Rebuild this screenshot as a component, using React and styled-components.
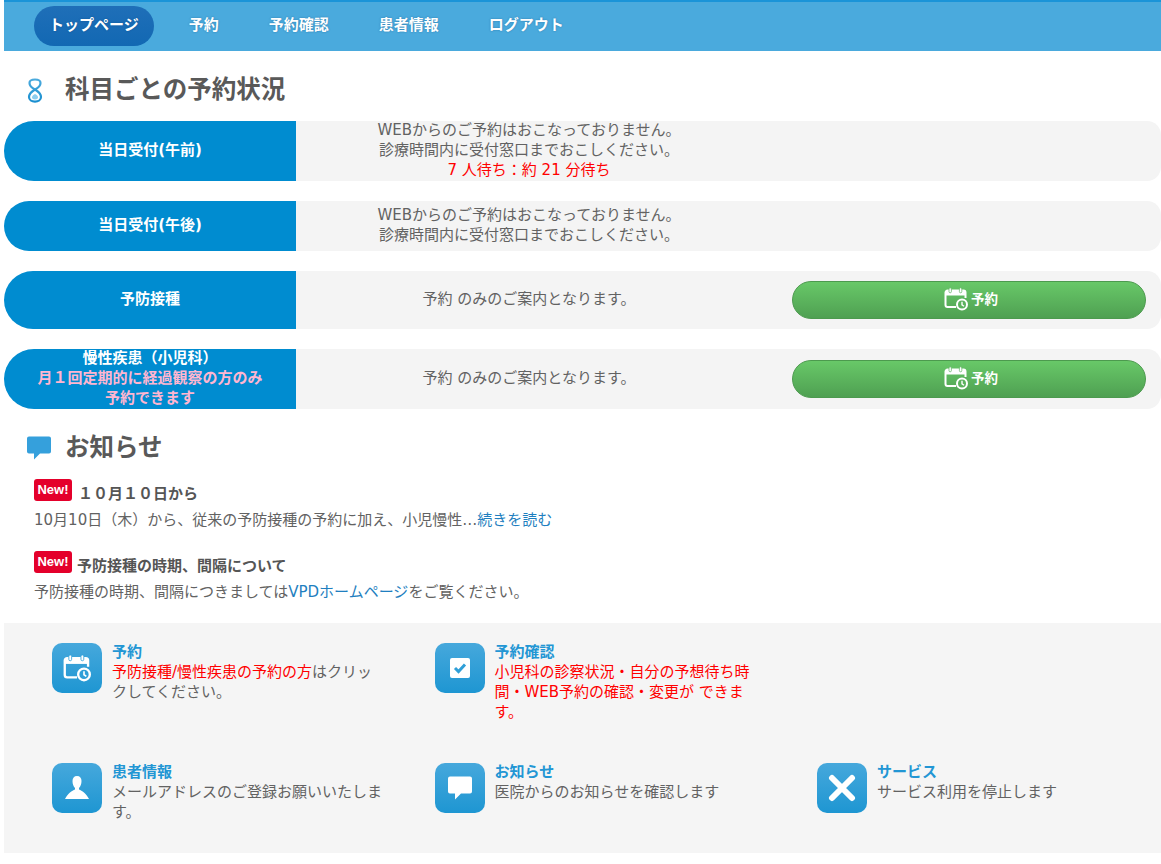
import React from "react";
import styled, { createGlobalStyle } from "styled-components";

const GlobalStyle = createGlobalStyle`
  html, body { margin: 0; padding: 0; background: #fff; }
  body {
    padding-left: 4px;
    font-family: "DejaVu Sans", "Noto Sans CJK JP", sans-serif;
    font-size: 15px;
    line-height: 20px;
    color: #626262;
  }
`;

// Icons
const CalendarClock = ({ size = 24 }) => (
  <svg width={size} height={size} viewBox="0 0 24 24" fill="none">
    <path d="M12 20H3.500A2 2 0 0 1 1.500 18V5.500a2 2 0 0 1 2-2h16a2 2 0 0 1 2 2V11" stroke="#fff" strokeWidth="2" />
    <path d="M1.500 4h20v4.500h-20z" fill="#fff" />
    <rect x="5" y=".8" width="2.400" height="5" rx="1.200" fill="#fff" stroke="currentColor" strokeWidth=".7" />
    <rect x="15.400" y=".8" width="2.400" height="5" rx="1.200" fill="#fff" stroke="currentColor" strokeWidth=".7" />
    <circle cx="18" cy="17.500" r="5" fill="currentColor" stroke="#fff" strokeWidth="2" />
    <path d="M18 14.800v3l2 1.400" stroke="#fff" strokeWidth="1.400" />
  </svg>
);

const CheckBox = () => (
  <svg width="20" height="20" viewBox="0 0 20 20">
    <rect width="20" height="20" rx="2" fill="#fff" />
    <path d="M5 10l3.500 3.500L15 6.500" fill="none" stroke="#2f9fd8" strokeWidth="3" />
  </svg>
);

const Bubble = ({ size = 24, fill = "#fff" }) => (
  <svg width={size} height={size} viewBox="0 0 24 23">
    <path d="M2 0h20a2 2 0 0 1 2 2v13a2 2 0 0 1-2 2H13l-6 6v-6H2a2 2 0 0 1-2-2V2a2 2 0 0 1 2-2z" fill={fill} />
  </svg>
);

const Person = () => (
  <svg width="24" height="24" viewBox="0 0 24 24" fill="#fff">
    <path d="M12 0c3 0 4.500 2 4.500 5 0 3-1 5.500-2.500 7v1.500c3 1.500 7 3.500 10 9.500H0c3-6 7-8 10-9.500V12C8.500 10.500 7.500 8 7.500 5c0-3 1.500-5 4.500-5z" />
  </svg>
);

const Cross = () => (
  <svg width="28" height="28" viewBox="0 0 28 28">
    <path d="M4 4l20 20M24 4L4 24" stroke="#fff" strokeWidth="6" strokeLinecap="round" />
  </svg>
);

const Hourglass = () => (
  <svg width="16" height="25" viewBox="0 0 16 25" fill="none">
    <defs>
      <linearGradient id="hg" x1="0" y1="0" x2="0" y2="1">
        <stop offset="0" stopColor="#4aaadd" />
        <stop offset="1" stopColor="#1a8fd0" />
      </linearGradient>
    </defs>
    <path d="M8 11.500C4 9.500 2.500 7.500 2.500 5 2.500 2.800 5 1.500 8 1.500S13.500 2.800 13.500 5C13.500 7.500 12 9.500 8 11.500c4 2.500 6 5 6 7.500 0 2.800-2.800 4.600-6 4.600S2 21.800 2 19c0-2.500 2-5 6-7.500z" stroke="url(#hg)" strokeWidth="2.200" />
    <path d="M8 16c2 1 3 2 3 3.300 0 1.400-1.300 2.200-3 2.200s-3-.8-3-2.200C5 18 6 17 8 16z" fill="#8ccdee" />
  </svg>
);

// Data
const navItems = ["トップページ", "予約", "予約確認", "患者情報", "ログアウト"];

const notReserved = ["WEBからのご予約はおこなっておりません。", "診療時間内に受付窓口までおこしください。"];

export default function App() {
  return (
    <>
      <GlobalStyle />
      <Nav>
        {navItems.map((item, i) => (
          <NavItem key={item} href="#" $active={i === 0}>{item}</NavItem>
        ))}
      </Nav>

      <Heading>
        <HeadingIcon><Hourglass /></HeadingIcon>
        科目ごとの予約状況
      </Heading>

      <Rows>
        <Row $h={60}>
          <RowLabel>当日受付(午前)</RowLabel>
          <RowBody>
            <RowText>
              {notReserved[0]}<br />{notReserved[1]}<br />
              <Red>7 人待ち：約 21 分待ち</Red>
            </RowText>
          </RowBody>
        </Row>
        <Row $h={50}>
          <RowLabel>当日受付(午後)</RowLabel>
          <RowBody>
            <RowText>{notReserved[0]}<br />{notReserved[1]}</RowText>
          </RowBody>
        </Row>
        <Row $h={58}>
          <RowLabel>予防接種</RowLabel>
          <RowBody>
            <RowText>予約 のみのご案内となります。</RowText>
            <GreenButton href="#"><CalendarClock />予約</GreenButton>
          </RowBody>
        </Row>
        <Row $h={60}>
          <RowLabel>
            慢性疾患（小児科）<br />
            <Pink>月１回定期的に経過観察の方のみ<br />予約できます</Pink>
          </RowLabel>
          <RowBody>
            <RowText>予約 のみのご案内となります。</RowText>
            <GreenButton href="#"><CalendarClock />予約</GreenButton>
          </RowBody>
        </Row>
      </Rows>

      <Heading>
        <HeadingIcon><Bubble size={24} fill="#35a0dc" /></HeadingIcon>
        お知らせ
      </Heading>

      <News>
        <NewsItem>
          <NewsTitle $gap={6}><Badge>New!</Badge><span>１０月１０日から</span></NewsTitle>
          <p>10月10日（木）から、従来の予防接種の予約に加え、小児慢性…<Link href="#">続きを読む</Link></p>
        </NewsItem>
        <NewsItem>
          <NewsTitle $gap={5}><Badge>New!</Badge><span>予防接種の時期、間隔について</span></NewsTitle>
          <p>予防接種の時期、間隔につきましては<Link href="#">VPDホームページ</Link>をご覧ください。</p>
        </NewsItem>
      </News>

      <Guide>
        <GuideItem>
          <GuideIcon><CalendarClock size={28} /></GuideIcon>
          <GuideText $w={272}>
            <GuideTitle>予約</GuideTitle>
            <Red>予防接種/慢性疾患の予約の方</Red>はクリックしてください。
          </GuideText>
        </GuideItem>
        <GuideItem>
          <GuideIcon><CheckBox /></GuideIcon>
          <GuideText $w={262}>
            <GuideTitle>予約確認</GuideTitle>
            <Red>小児科の診察状況・自分の予想待ち時間・WEB予約の確認・変更が できます。</Red>
          </GuideText>
        </GuideItem>
        <GuideItem />
        <GuideItem>
          <GuideIcon><Person /></GuideIcon>
          <GuideText $w={272}>
            <GuideTitle>患者情報</GuideTitle>
            メールアドレスのご登録お願いいたします。
          </GuideText>
        </GuideItem>
        <GuideItem>
          <GuideIcon><Bubble /></GuideIcon>
          <GuideText $w={262}>
            <GuideTitle>お知らせ</GuideTitle>
            医院からのお知らせを確認します
          </GuideText>
        </GuideItem>
        <GuideItem>
          <GuideIcon><Cross /></GuideIcon>
          <GuideText $w={272}>
            <GuideTitle>サービス</GuideTitle>
            サービス利用を停止します
          </GuideText>
        </GuideItem>
      </Guide>
    </>
  );
}

const Nav = styled.nav`
  display: flex;
  align-items: center;
  gap: 20px;
  height: 51px;
  box-sizing: border-box;
  padding: 4px 0 5px 30px;
  border-top: 2px solid #1a94d8;
  background: #4aaadd;
`;
const NavItem = styled.a`
  display: flex;
  align-items: center;
  height: 40px;
  box-sizing: border-box;
  padding: 0 15px 2px;
  border-radius: 20px;
  color: #fff;
  font-size: 15px;
  font-weight: 700;
  text-decoration: none;
  text-shadow: 0 0 2px rgba(0, 60, 110, 0.45);
  background: ${(p) => (p.$active ? "linear-gradient(#1f6fb8, #1268b3)" : "transparent")};
`;
const Heading = styled.h2`
  display: flex;
  align-items: center;
  height: 70px;
  padding-top: 8px;
  box-sizing: border-box;
  margin: 0;
  font-size: 24.500px;
  font-weight: 700;
  color: #595959;
`;
const HeadingIcon = styled.span`
  display: flex;
  justify-content: flex-start;
  width: 24px;
  margin-left: 23px;
  margin-right: 14px;
`;
const Rows = styled.div`
  display: flex;
  flex-direction: column;
  gap: 20px;
`;
const Row = styled.div`
  display: flex;
  height: ${(p) => p.$h}px;
`;
const RowLabel = styled.div`
  display: flex;
  flex-direction: column;
  justify-content: center;
  flex: 0 0 292px;
  box-sizing: border-box;
  padding-bottom: 2px;
  border-radius: 30px 0 0 30px;
  background: #008cd0;
  color: #fff;
  font-size: 15px;
  font-weight: 700;
  text-align: center;
`;
const Pink = styled.span`
  color: #ffb6d0;
`;
const RowBody = styled.div`
  display: flex;
  align-items: center;
  flex: 1;
  padding-right: 15px;
  background: #f4f4f4;
  border-radius: 0 14px 14px 0;
`;
const RowText = styled.div`
  flex: 0 0 460px;
  display: flex;
  flex-direction: column;
  justify-content: center;
  align-self: stretch;
  box-sizing: border-box;
  padding: 0 0 2px 6px;
  text-align: center;
`;
const Red = styled.span`
  color: #f00;
`;
const GreenButton = styled.a`
  display: flex;
  align-items: center;
  justify-content: center;
  gap: 3px;
  flex: 1;
  height: 38px;
  box-sizing: border-box;
  margin-left: 36px;
  padding: 0 0 2px 4px;
  border: 1px solid #4c9a4e;
  border-radius: 19px;
  background: linear-gradient(#68c868, #4fa052);
  color: #fff;
  font-size: 13.500px;
  font-weight: 700;
  text-decoration: none;
  svg { color: #5cb25e; }
`;
const News = styled.div`
  display: flex;
  flex-direction: column;
  gap: 21px;
  padding: 0 0 21px 30px;
  p { margin: 0; }
`;
const NewsItem = styled.div`
  display: flex;
  flex-direction: column;
  gap: 6px;
`;
const NewsTitle = styled.div`
  display: flex;
  align-items: flex-start;
  gap: ${(p) => p.$gap}px;
  height: 25px;
  font-weight: 700;
  color: #555;
  span:last-child { margin-top: 5px; }
`;
const Badge = styled.span`
  display: inline-block;
  width: 38px;
  height: 22px;
  border-radius: 3px;
  background: #e4002b;
  color: #fff;
  font-family: "Liberation Sans", sans-serif;
  font-size: 13px;
  font-weight: 700;
  line-height: 22px;
  text-align: center;
`;
const Link = styled.a`
  color: #1f7fc0;
  text-decoration: none;
`;
const Guide = styled.section`
  display: grid;
  grid-template-columns: repeat(3, 382.500px);
  grid-auto-rows: 120px;
  height: 230px;
  box-sizing: border-box;
  padding: 18px 0 0 48px;
  background: #f5f5f5;
`;
const GuideItem = styled.div`
  display: flex;
  align-items: flex-start;
  gap: 10px;
`;
const GuideIcon = styled.span`
  display: flex;
  align-items: center;
  justify-content: center;
  flex: 0 0 50px;
  height: 50px;
  margin-top: 2px;
  border-radius: 10px;
  background: linear-gradient(#46a8dc, #1e96d2);
  color: #2f9fd8;
`;
const GuideText = styled.div`
  width: ${(p) => p.$w}px;
  padding-top: 1px;
`;
const GuideTitle = styled.div`
  color: #2296d4;
  font-weight: 700;
  font-size: 15px;
`;
